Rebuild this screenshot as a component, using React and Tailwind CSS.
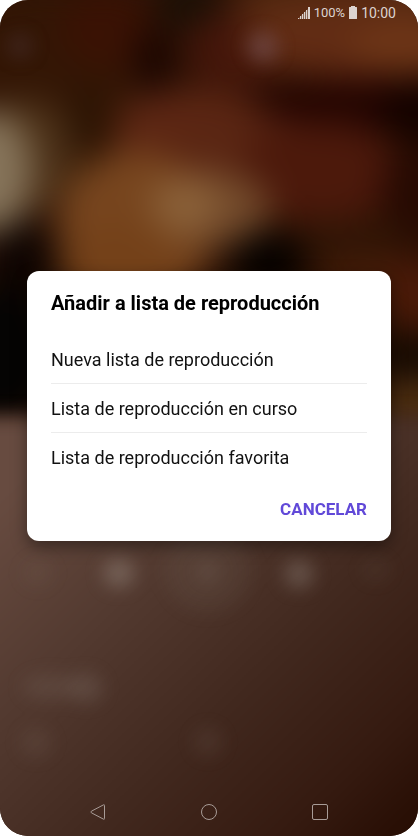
import React from 'react';

const options = [
    { id: 'new', label: 'Nueva lista de reproducción' },
    { id: 'current', label: 'Lista de reproducción en curso' },
    { id: 'favorite', label: 'Lista de reproducción favorita' },
];

// blurred album cover, upper half of the player
const coverShapes = [
    { cx: 50, cy: 70, rx: 130, ry: 80, fill: '#331605' },
    { cx: 110, cy: 30, rx: 50, ry: 40, fill: '#3a1204' },
    { cx: 190, cy: 4, rx: 34, ry: 26, fill: '#1a1006' },
    { cx: 155, cy: 62, rx: 20, ry: 36, fill: '#1a0601' },
    { cx: 235, cy: 50, rx: 50, ry: 40, fill: '#44160a' },
    { cx: 360, cy: 0, rx: 130, ry: 28, fill: '#562a11' },
    { cx: 350, cy: 40, rx: 110, ry: 36, fill: '#622c14' },
    { cx: 410, cy: 48, rx: 60, ry: 26, fill: '#6e3617' },
    { cx: 380, cy: 104, rx: 130, ry: 28, fill: '#240501' },
    { cx: 425, cy: 112, rx: 46, ry: 30, fill: '#140300' },
    { cx: 190, cy: 135, rx: 84, ry: 46, fill: '#5c2613' },
    { cx: 250, cy: 165, rx: 90, ry: 50, fill: '#5a2613' },
    { cx: 320, cy: 172, rx: 84, ry: 50, fill: '#4c190b' },
    { cx: 416, cy: 200, rx: 34, ry: 60, fill: '#260a02' },
    { cx: 92, cy: 125, rx: 24, ry: 40, fill: '#2c1403' },
    { cx: 30, cy: 155, rx: 44, ry: 56, fill: '#4c3118' },
    { cx: -10, cy: 172, rx: 42, ry: 62, fill: '#86745a' },
    { cx: 135, cy: 228, rx: 78, ry: 78, fill: '#77451e' },
    { cx: 215, cy: 208, rx: 56, ry: 38, fill: '#72492a' },
    { cx: 185, cy: 205, rx: 34, ry: 30, fill: '#8a6038' },
    { cx: 120, cy: 265, rx: 60, ry: 44, fill: '#744119' },
    { cx: 22, cy: 262, rx: 36, ry: 40, fill: '#0f0502' },
    { cx: 340, cy: 240, rx: 80, ry: 22, fill: '#301505' },
    { cx: 268, cy: 262, rx: 38, ry: 32, fill: '#060200' },
    { cx: 375, cy: 280, rx: 60, ry: 24, fill: '#451c08' },
    { cx: 420, cy: 295, rx: 40, ry: 36, fill: '#4a1a08' },
    { cx: 0, cy: 355, rx: 60, ry: 70, fill: '#050403' },
    { cx: 418, cy: 355, rx: 50, ry: 22, fill: '#140a02' },
    { cx: 418, cy: 405, rx: 50, ry: 24, fill: '#4e3012' },
];

// blurred player controls, lower half
const controlShapes = [
    { cx: 38, cy: 573, rx: 16, ry: 14, opacity: 0.06 },
    { cx: 119, cy: 573, rx: 16, ry: 15, opacity: 0.32 },
    { cx: 208, cy: 571, rx: 44, ry: 42, opacity: 0.07 },
    { cx: 208, cy: 572, rx: 12, ry: 12, opacity: 0.12 },
    { cx: 299, cy: 574, rx: 15, ry: 15, opacity: 0.28 },
    { cx: 376, cy: 570, rx: 15, ry: 12, opacity: 0.06 },
    { cx: 50, cy: 687, rx: 28, ry: 13, opacity: 0.12 },
    { cx: 86, cy: 688, rx: 17, ry: 15, opacity: 0.16 },
    { cx: 36, cy: 743, rx: 16, ry: 15, opacity: 0.09 },
    { cx: 208, cy: 742, rx: 15, ry: 15, opacity: 0.09 },
];

const PlayerBackdrop = () => (
    <svg
        className="absolute inset-0 w-full h-full"
        viewBox="0 0 418 836"
        preserveAspectRatio="none"
        aria-hidden="true"
    >
        <defs>
            <linearGradient id="panel" gradientUnits="userSpaceOnUse" x1="20" y1="480" x2="380" y2="850">
                <stop offset="0" stopColor="#674b40"/>
                <stop offset="0.3" stopColor="#533a30"/>
                <stop offset="0.6" stopColor="#41281e"/>
                <stop offset="0.85" stopColor="#351a10"/>
                <stop offset="1" stopColor="#280e04"/>
            </linearGradient>
            <filter id="coverBlur" x="-20%" y="-20%" width="140%" height="140%" colorInterpolationFilters="sRGB">
                <feGaussianBlur stdDeviation="17"/>
            </filter>
            <filter id="controlBlur" x="-100%" y="-100%" width="300%" height="300%" colorInterpolationFilters="sRGB">
                <feGaussianBlur stdDeviation="9"/>
            </filter>
        </defs>
        <rect width="418" height="836" fill="#2e1306"/>
        <g filter="url(#coverBlur)">
            {coverShapes.map((shape, i) => (
                <ellipse key={i} {...shape}/>
            ))}
        </g>
        <circle cx="263" cy="47" r="16" fill="#806470" opacity="0.4" filter="url(#controlBlur)"/>
        <circle cx="20" cy="46" r="14" fill="#5c4650" opacity="0.25" filter="url(#controlBlur)"/>
        <rect x="-40" y="416" width="498" height="480" fill="url(#panel)" filter="url(#controlBlur)"/>
        <g filter="url(#controlBlur)" fill="#b0a8a0">
            {controlShapes.map((shape, i) => (
                <ellipse key={i} {...shape}/>
            ))}
        </g>
    </svg>
);

const StatusBar = () => (
    <header className="relative flex items-center justify-end h-[25px] pr-[22px] text-[#dcd3cf]">
        <svg className="w-3 h-3 mr-1" viewBox="0 0 12 12" fill="currentColor" aria-hidden="true">
            <path d="M0 12 12 0V12z" opacity="0.35"/>
            <rect x="0" y="11" width="1" height="1"/>
            <rect x="2" y="9" width="1" height="3"/>
            <rect x="4" y="7" width="1" height="5"/>
            <rect x="6" y="5" width="1" height="7"/>
            <rect x="8" y="3" width="1" height="9"/>
            <rect x="10" y="0" width="2" height="12"/>
        </svg>
        <span className="text-[13px] leading-4">100%</span>
        <svg className="w-2 h-[13px] mx-1" viewBox="0 0 8 13" fill="currentColor" aria-hidden="true">
            <path d="M2 0h4v1h1.4q.6 0 .6.6v10.8q0 .6-.6.6H.6q-.6 0-.6-.6V1.600q0-.6.6-.6H2z"/>
        </svg>
        <span className="text-sm leading-4">10:00</span>
    </header>
);

const NavigationBar = () => (
    <nav className="relative grid grid-cols-3 h-[49px] px-[42px] text-[#a89c97]">
        <button type="button" aria-label="Atrás" className="flex items-center justify-center">
            <svg className="w-4 h-4" viewBox="0 0 16 16" fill="none" stroke="currentColor" aria-hidden="true">
                <path d="M14.500 1.500v13q0 1.200-1.100.6L1.400 8.800q-1.200-.8 0-1.600L13.400.900q1.100-.6 1.100.6z"/>
            </svg>
        </button>
        <button type="button" aria-label="Inicio" className="flex items-center justify-center">
            <svg className="w-4 h-4" viewBox="0 0 16 16" fill="none" stroke="currentColor" aria-hidden="true">
                <circle cx="8" cy="8" r="7.500"/>
            </svg>
        </button>
        <button type="button" aria-label="Recientes" className="flex items-center justify-center">
            <svg className="w-4 h-4" viewBox="0 0 16 16" fill="none" stroke="currentColor" aria-hidden="true">
                <rect x=".5" y=".5" width="15" height="15" rx="1.500"/>
            </svg>
        </button>
    </nav>
);

const PlaylistDialog = () => (
    <div
        role="dialog"
        aria-labelledby="dialog-title"
        className="w-full px-6 py-5 bg-white rounded-xl shadow-[0_6px_16px_rgba(0,0,0,0.4)]"
    >
        <h1 id="dialog-title" className="text-xl leading-6 font-bold text-black">
            Añadir a lista de reproducción
        </h1>
        <ul className="mt-5 divide-y divide-[#ececec]">
            {options.map((option) => (
                <li key={option.id}>
                    <button type="button" className="w-full h-12 pt-0.5 text-left text-lg text-[#111111]">
                        {option.label}
                    </button>
                </li>
            ))}
        </ul>
        <div className="flex justify-end mt-4">
            <button type="button" className="text-[17px] leading-6 font-bold text-[#6149d8]">
                CANCELAR
            </button>
        </div>
    </div>
);

const App = () => {
    return (
        <div className="min-h-screen bg-white font-[Roboto,sans-serif]">
            <div className="relative flex flex-col min-h-screen overflow-hidden rounded-[28px]">
                <PlayerBackdrop/>
                <StatusBar/>
                <main className="relative flex flex-1 items-center px-[27px]">
                    <PlaylistDialog/>
                </main>
                <NavigationBar/>
            </div>
        </div>
    );
};

export default App;
